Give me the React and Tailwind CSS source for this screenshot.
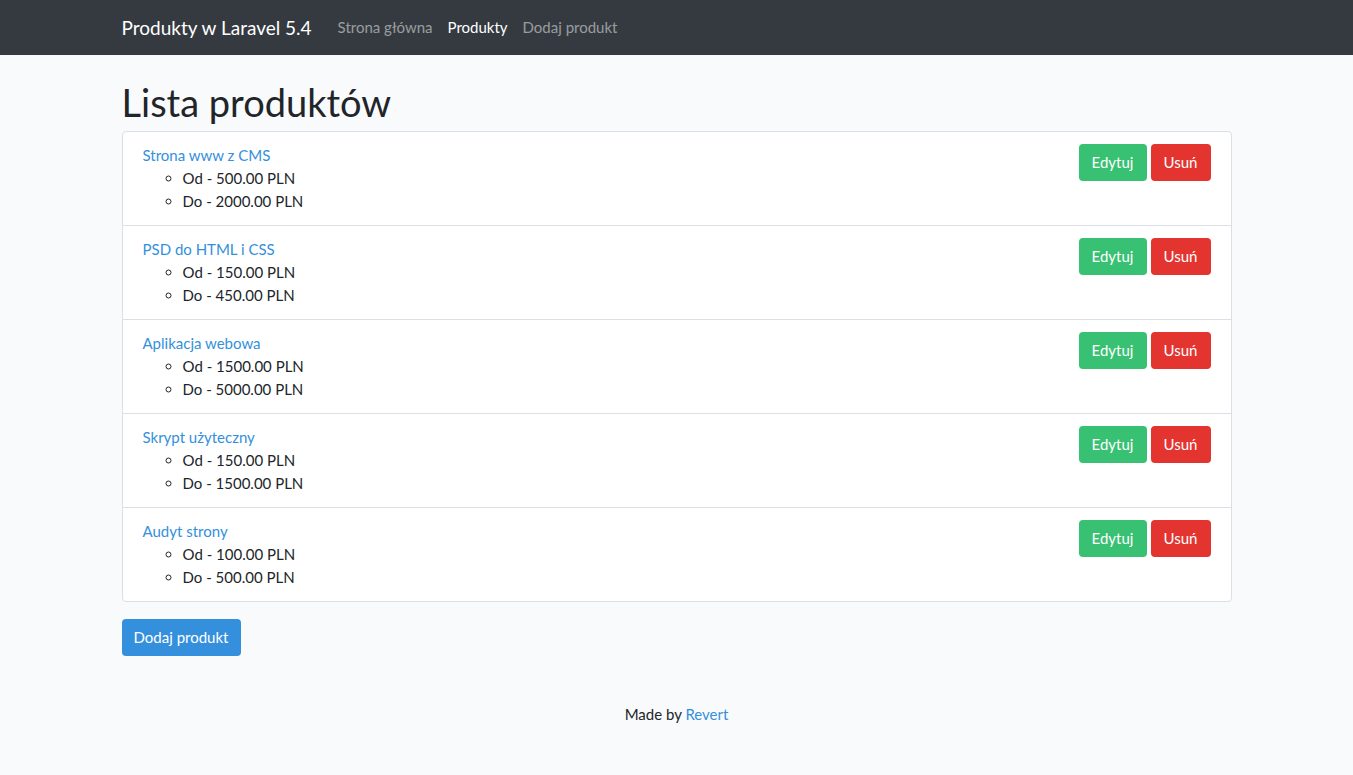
import React from "react";

const products = [
  { name: "Strona www z CMS", od: "500.00", do: "2000.00" },
  { name: "PSD do HTML i CSS", od: "150.00", do: "450.00" },
  { name: "Aplikacja webowa", od: "1500.00", do: "5000.00" },
  { name: "Skrypt użyteczny", od: "150.00", do: "1500.00" },
  { name: "Audyt strony", od: "100.00", do: "500.00" },
];

export default function App() {
  return (
    <div className="min-h-[775px] bg-[#f8fafc] text-[#212529] text-[15px] leading-[23px]" style={{ fontFamily: "Lato, 'Open Sans', sans-serif" }}>
      <nav className="h-[55px] bg-[#343a40]">
        <div className="w-[1110px] mx-auto h-full flex items-center">
          <span className="text-white text-[19px] mr-[26px]">Produkty w Laravel 5.4</span>
          <a className="text-[15px] text-white/50 mr-[15px]">Strona główna</a>
          <a className="text-[15px] text-white mr-[15px]">Produkty</a>
          <a className="text-[15px] text-white/50">Dodaj produkt</a>
        </div>
      </nav>
      <main className="w-[1110px] mx-auto">
        <h1 className="text-[38px] leading-[46px] mt-[24px] mb-[6px]">Lista produktów</h1>
        <div className="bg-white border border-[#dcdfe3] rounded-[4px]">
          {products.map((p, i) => (
            <div key={i} className={"flex justify-between px-[20px] pt-[12px] pb-[12px] " + (i < products.length - 1 ? "border-b border-[#dcdfe3]" : "")}>
              <div>
                <a className="text-[#3490dc]">{p.name}</a>
                <ul className="list-[circle] pl-[40px]">
                  <li>Od - {p.od} PLN</li>
                  <li>Do - {p.do} PLN</li>
                </ul>
              </div>
              <div className="flex gap-[4px] items-start">
                <button className="bg-[#38c172] text-white w-[68px] h-[37px] rounded-[4px]">Edytuj</button>
                <button className="bg-[#e3342f] text-white w-[60px] h-[37px] rounded-[4px]">Usuń</button>
              </div>
            </div>
          ))}
        </div>
        <button className="mt-[17px] bg-[#3490dc] text-white w-[119px] h-[37px] rounded-[4px]">Dodaj produkt</button>
        <footer className="text-center mt-[47px]">
          Made by <a className="text-[#3490dc]">Revert</a>
        </footer>
      </main>
    </div>
  );
}
